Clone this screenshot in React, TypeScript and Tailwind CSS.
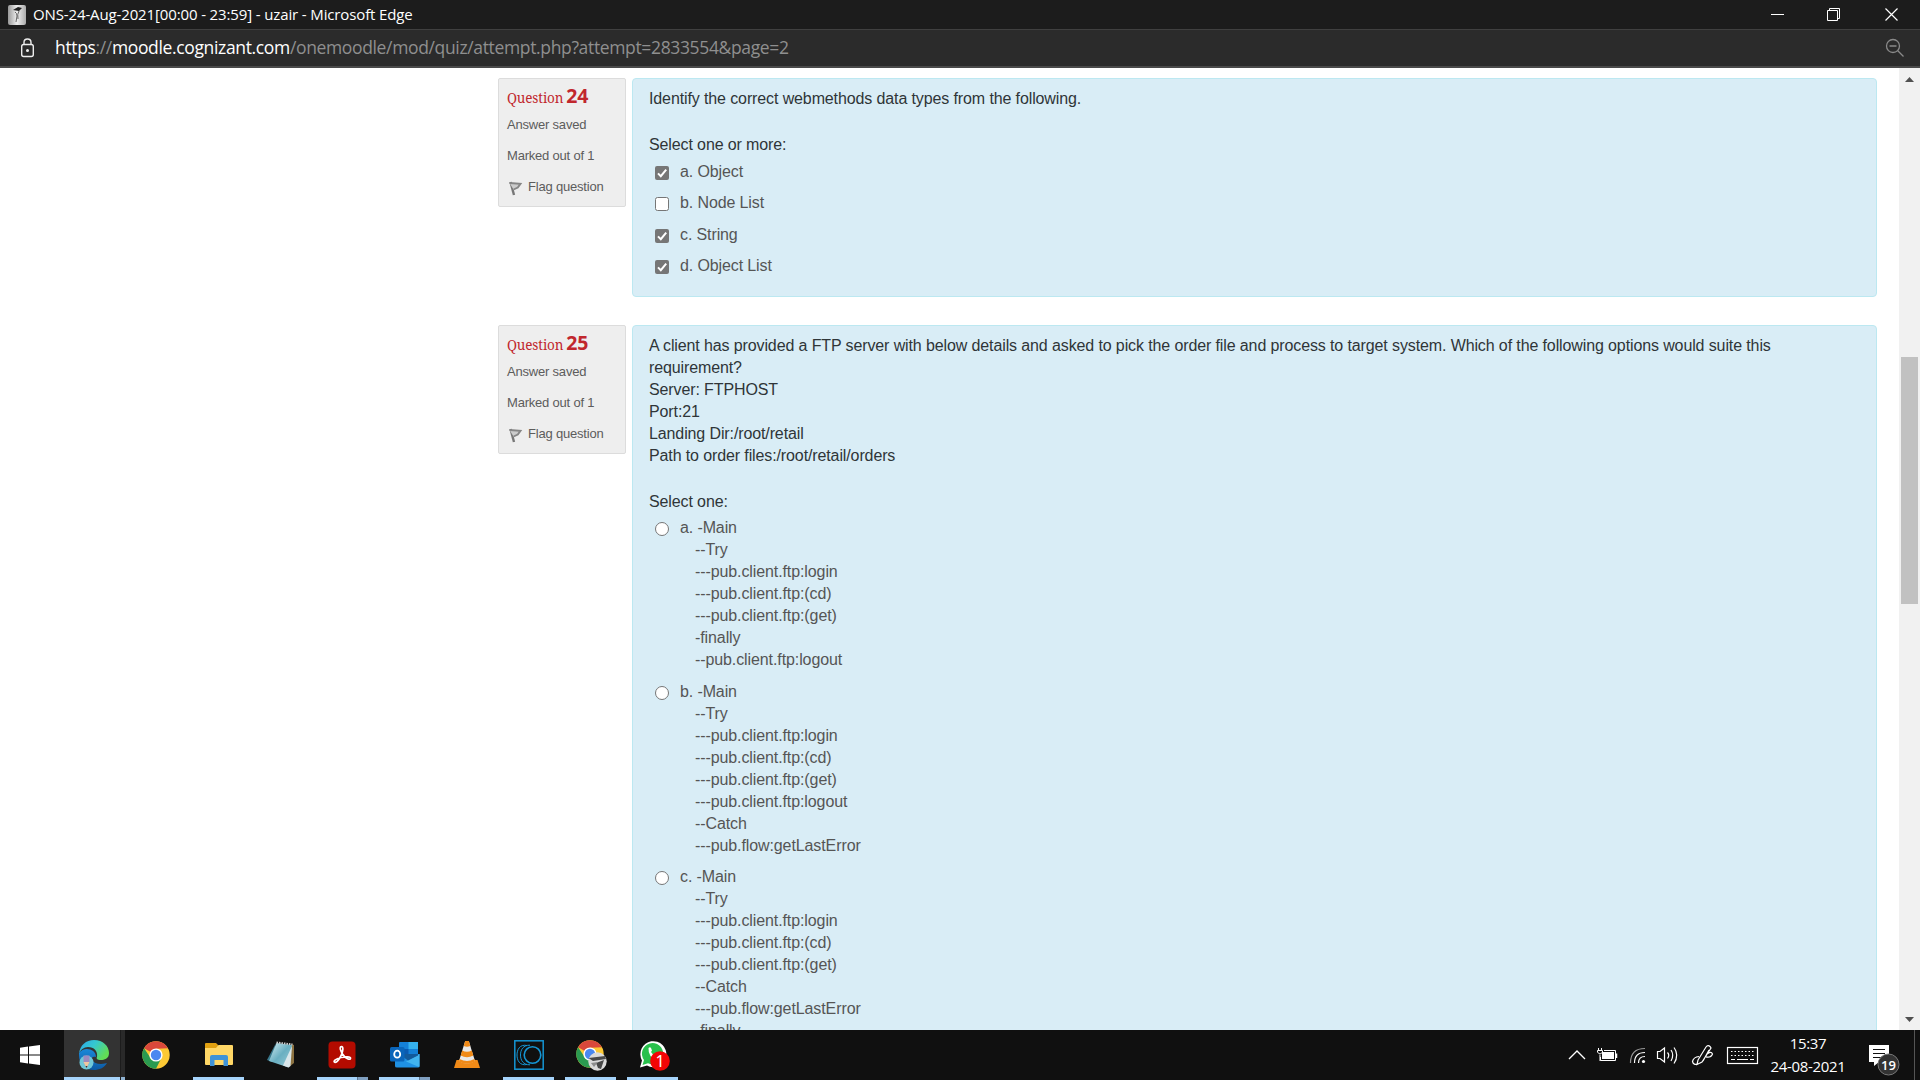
import React from "react";

const BODY = "font-['Liberation_Sans',sans-serif]";

function Flag() {
  return (
    <svg width="16" height="16" viewBox="0 0 16 16" className="mt-[4px] shrink-0">
      <path d="M3.500 2 L7 15" stroke="#777" strokeWidth="2.400" fill="none" />
      <path d="M2.500 3 L13.500 3.800 L10.800 7.600 L6.600 9.500" stroke="#858585" strokeWidth="1.900" fill="#ccc" />
    </svg>
  );
}

function Info({ n }: { n: string }) {
  return (
    <div className="h-[129px] w-[128px] shrink-0 rounded-[2px] border border-[#dcdcdc] bg-[#eee] pl-[8px] text-[13px] tracking-[-0.2px] text-[#5c5c5c]">
      <div className="flex h-[35px] items-baseline pt-[3px] text-[#c1272d]">
        <span className="font-['Noto_Serif','DejaVu_Serif',serif] text-[13.5px] tracking-[-0.15px]">Question</span>
        <span className="ml-[3px] font-['Noto_Sans',sans-serif] text-[19.5px] leading-[28px] font-bold tracking-[-0.2px]">{n}</span>
      </div>
      <div className="h-[31px] leading-[22px]">Answer saved</div>
      <div className="h-[31px] leading-[22px]">Marked out of 1</div>
      <div className="flex gap-[5px] leading-[22px]">
        <Flag />
        <span>Flag question</span>
      </div>
    </div>
  );
}

function Check({ on }: { on: boolean }) {
  return on ? (
    <svg width="14" height="14" viewBox="0 0 14 14" className="mt-[5px] shrink-0">
      <rect width="14" height="14" rx="2" fill="#767676" />
      <path d="M3 7.4 L5.8 10.2 L11.2 3.6" stroke="#fff" strokeWidth="2" fill="none" />
    </svg>
  ) : (
    <span className="mt-[5px] h-[14px] w-[14px] shrink-0 rounded-[2.5px] border border-[#767676] bg-white" />
  );
}

const checks: [string, boolean][] = [
  ["a. Object", true],
  ["b. Node List", false],
  ["c. String", true],
  ["d. Object List", true],
];

const radios: { k: string; lines: string[] }[] = [
  { k: "a.", lines: ["-Main", "--Try", "---pub.client.ftp:login", "---pub.client.ftp:(cd)", "---pub.client.ftp:(get)", "-finally", "--pub.client.ftp:logout"] },
  { k: "b.", lines: ["-Main", "--Try", "---pub.client.ftp:login", "---pub.client.ftp:(cd)", "---pub.client.ftp:(get)", "---pub.client.ftp:logout", "--Catch", "---pub.flow:getLastError"] },
  { k: "c.", lines: ["-Main", "--Try", "---pub.client.ftp:login", "---pub.client.ftp:(cd)", "---pub.client.ftp:(get)", "--Catch", "---pub.flow:getLastError", "-finally"] },
];

function TitleBar() {
  return (
    <div className="flex h-[30px] shrink-0 items-center border-b border-[#404040] bg-[#1c1c1c] text-white">
      <svg width="18" height="20" viewBox="0 0 18 20" className="ml-[8px]">
        <defs>
          <linearGradient id="fav"><stop offset="0" stopColor="#999" /><stop offset=".5" stopColor="#eee" /><stop offset="1" stopColor="#aaa" /></linearGradient>
        </defs>
        <rect width="18" height="20" rx="2" fill="url(#fav)" />
        <path d="M5 5 L10 2 L14 3 L11 6 Z" fill="#222" />
        <path d="M7 7 Q9 8 9 11 L8 17 M11 6 Q9 9 10 14" stroke="#666" fill="none" />
      </svg>
      <span className="ml-[7px] font-['Open_Sans',sans-serif] text-[15px] tracking-[-0.13px] whitespace-nowrap">ONS-24-Aug-2021[00:00 - 23:59] - uzair - Microsoft Edge</span>
      <svg width="160" height="28" viewBox="0 0 160 28" className="ml-auto" fill="none" stroke="#fff">
        <path d="M11 13.5 H24" />
        <path d="M67.500 9.500 H77.500 V19.500 H67.500 Z M69.500 9.500 V7.500 H79.500 V17.500 H77.500" />
        <path d="M125.500 7.500 L137.500 19.500 M137.500 7.500 L125.500 19.500" strokeWidth="1.2" />
      </svg>
    </div>
  );
}

function AddressBar() {
  return (
    <div className="flex h-[38px] shrink-0 items-center border-b-2 border-[#4a4a4a] bg-[#2b2b2b]">
      <svg width="16" height="20" viewBox="0 0 16 20" className="ml-[19px]" fill="none" stroke="#eee" strokeWidth="1.4">
        <rect x="2.700" y="6.500" width="11.600" height="12" rx="2" />
        <path d="M5 6.500 V4.500 Q5 1 8.500 1 Q12 1 12 4.500 V6.500" />
        <circle cx="8.500" cy="12.500" r=".8" fill="#eee" />
      </svg>
      <span className="mb-[2px] ml-[20px] font-['Open_Sans',sans-serif] text-[17.5px] tracking-[-0.35px] whitespace-nowrap text-[#8f8f8f]">
        <span className="text-white">https</span>://<span className="text-white">moodle.cognizant.com</span>/onemoodle/mod/quiz/attempt.php?attempt=2833554&amp;page=2
      </span>
      <svg width="20" height="20" viewBox="0 0 20 20" className="mr-[15px] ml-auto" fill="none" stroke="#8a8a8a" strokeWidth="1.300">
        <circle cx="8" cy="8" r="6.500" />
        <path d="M4.500 8 H11.500 M12.800 12.800 L18.500 18.500" />
      </svg>
    </div>
  );
}

function ChromeLogo() {
  return (
    <g>
      <circle cx="14" cy="14" r="13.700" fill="#fcc934" />
      <path d="M14 14 L2.100 7.150 A13.700 13.700 0 0 1 25.900 7.150 L14 7.800 Z" fill="#d9483b" />
      <path d="M14 14 L19.400 17.100 L14 27.700 A13.700 13.700 0 0 1 2.100 7.150 L8.600 17.100 Z" fill="#2a9a50" />
      <circle cx="14" cy="14" r="6.600" fill="#fff" />
      <circle cx="14" cy="14" r="5.200" fill="#4a88f0" />
    </g>
  );
}

const S = { width: 30, height: 30, viewBox: "0 0 30 30" };

function Task({ w = 51, gap = 0, shade = "", bar = "", children }: { w?: number; gap?: number; shade?: string; bar?: string; children: React.ReactNode }) {
  return (
    <div className={"flex h-[50px] shrink-0 flex-col items-center justify-between " + shade} style={{ width: w, marginRight: gap }}>
      <div className="flex h-[47px] items-center pt-[3px]">{children}</div>
      <div className={"flex h-[3px] w-full " + (bar ? "bg-[#a6d4fb]" : "")}>
        {bar === "double" && <span className="ml-auto w-[11px] border-l border-[#5a7590] bg-[#7f9fc0]" />}
      </div>
    </div>
  );
}

function Taskbar() {
  return (
    <div className="flex h-[50px] shrink-0 items-center bg-[#101010] text-white">
      <div className="flex w-[64px] shrink-0 justify-center">
        <svg width="20" height="20" viewBox="0 0 20 20" className="mr-[4px]" fill="#fff">
          <path d="M0 2.800 L8 1.600 V9.400 H0 Z M9 1.450 L20 0 V9.400 H9 Z M0 10.600 H8 V18.400 L0 17.200 Z M9 10.600 H20 V20 L9 18.550 Z" />
        </svg>
      </div>
      <div className="flex bg-[#292929]">
        <Task w={56} shade="bg-[#333]" bar="single">
          <svg width="30" height="30" viewBox="0 0 30 30" className="ml-[4px]">
            <defs>
              <linearGradient id="e1" x1="0" x2="1" y1="0" y2=".5"><stop offset="0" stopColor="#2aa5e8" /><stop offset=".5" stopColor="#35c8d0" /><stop offset="1" stopColor="#62dd55" /></linearGradient>
              <linearGradient id="e2" x1="0" x2="0" y1="0" y2="1"><stop offset="0" stopColor="#1b88d8" /><stop offset="1" stopColor="#0c59a4" /></linearGradient>
            </defs>
            <path d="M0 13 C5 6 17 9 17 17 C10 15 12 24 22 24 C25 24 27 23 28 23 C25 28 20 30 15 30 C6 30 0 24 0 15 Z" fill="url(#e2)" />
            <path d="M0 14 C1 5 7 0 15 0 C24 0 30 6 30 13 C30 19 25 20 22 20 C18 20 17 18.500 18 17 C19 11 15 7 9 7 C5 7 1 10 0 14 Z" fill="url(#e1)" />
            <circle cx="7.500" cy="22.500" r="7" fill="#70c8d8" />
            <path d="M4.500 15.500 H10.500 V22 L7.500 28 L4.500 22 Z" fill="#9d8ac0" />
            <path d="M4.500 22 H10.500 L7.500 28 Z" fill="#f0c8a0" />
            <path d="M6.500 26 H8.500 L7.500 28 Z" fill="#333" />
          </svg>
        </Task>
        <div className="flex h-[50px] w-[5px] items-end border-l border-[#1c1c1c]">
          <span className="h-[3px] w-full bg-[#8fb2d2]" />
        </div>
      </div>
      <Task w={51} gap={11}>
        <svg width="28" height="28" viewBox="0 0 28 28" className="ml-[10px]"><ChromeLogo /></svg>
      </Task>
      <div className="w-[6px] shrink-0" />
      <Task gap={11} bar="single">
        <svg width="28" height="24" viewBox="0 0 28 24" className="-mt-[2px]">
          <path d="M0 2 Q0 1 1 1 H11 L13 3 V8 H0 Z" fill="#e0a010" />
          <path d="M0 6 H11 L13.500 3 H27 Q28 3 28 4 V22 Q28 23 27 23 H1 Q0 23 0 22 Z" fill="#ffd766" />
          <path d="M5 24 V15 Q5 13 7 13 H21 Q23 13 23 15 V24 H18.500 V18 H9.500 V24 Z" fill="#3f93d8" />
        </svg>
      </Task>
      <Task gap={11}>
        <svg {...S}>
          <defs><linearGradient id="np" x1="0" x2="1" y1="0" y2="1"><stop offset="0" stopColor="#d5edf2" /><stop offset=".5" stopColor="#69afc1" /><stop offset="1" stopColor="#9cccd8" /></linearGradient></defs>
          <path d="M25 4 L28 5 V23 L23 27 Z" fill="#8d7342" />
          <path d="M10 3 L1 20 L6 22 Z" fill="#39788c" />
          <path d="M10.500 3 L26 5 L22.500 27.500 L3 21 Z" fill="url(#np)" />
          <path d="M26 6 L24.500 26 L22.500 27.500 L17 25.500 Z" fill="#d9e6ea" />
          <path d="M10.500 2.500 L26.500 4.500" stroke="#ccc" strokeWidth="2" strokeDasharray="1.500 1" />
        </svg>
      </Task>
      <Task gap={11} bar="double">
        <svg width="28" height="28" viewBox="0 0 28 28" className="-ml-px">
          <rect x=".5" y=".5" width="27" height="27" rx="4" fill="#b30b00" />
          <path d="M12.500 6 C14.500 4.500 15.500 7 14.500 10.500 C13.500 15 9.500 21.500 7 21.300 C4.500 21 7.500 17.600 13 16.500 C18 15.500 22.500 15.500 22.500 17.300 C22.300 19.500 17.500 17.800 14.500 13 C12.500 9.500 11.700 7 12.500 6 Z" fill="none" stroke="#fff" strokeWidth="1.700" />
        </svg>
      </Task>
      <Task gap={11} bar="double">
        <svg {...S}>
          <rect x="9" y="2" width="19" height="20" rx="1" fill="#1480d8" />
          <path d="M18.500 2 H28 V9 H18.500 Z" fill="#35b1ee" />
          <path d="M9 9 H18.500 V16 H9 Z" fill="#0a5ab0" />
          <path d="M5 15 L29.500 14 V26 Q29.500 27.500 28 27.500 H7 Q5 27.500 5 26 Z" fill="#1f91e4" />
          <path d="M16 21.500 L29.500 14 V26 Q29.500 27 29 27 Z" fill="#41b4f0" />
          <path d="M9 14 L18 20.500 L28 15.500 V14 Z" fill="#125a9c" />
          <rect x="0" y="7" width="14.500" height="14.500" rx="1.500" fill="#0a65ba" />
          <ellipse cx="7.200" cy="14.200" rx="3" ry="3.500" fill="none" stroke="#fff" strokeWidth="1.800" />
        </svg>
      </Task>
      <Task gap={11}>
        <svg {...S}>
          <path d="M4.500 20 H25.500 L28 28 H2 Z" fill="#f08a17" />
          <path d="M13.200 1 H16.800 L23 21 Q15 26 7 21 Z" fill="#e9e9e9" />
          <path d="M13.200 1 H16.800 L18.300 6 Q15 7.500 11.700 6 Z M10.200 10.500 Q15 13 19.800 10.500 L21.300 15.500 Q15 19 8.700 15.500 Z M7.600 19 Q15 23 22.400 19 L23 21.500 Q15 26 7 21.500 Z" fill="#f08a17" />
        </svg>
      </Task>
      <Task gap={11} bar="single">
        <svg {...S} fill="none" stroke="#1595d3">
          <rect x=".8" y=".8" width="28.400" height="28.400" strokeWidth="1.500" />
          <circle cx="18.500" cy="15" r="8.300" strokeWidth="1.600" />
          <path d="M13 5.500 C5.500 4 3 10 3 15 C3 20 5.500 26 13 24.500 M16 5.200 C9 5 6.500 10 6.500 15 C6.500 20 9 25 16 24.800" />
        </svg>
      </Task>
      <Task gap={11} bar="single">
        <svg width="32" height="31" viewBox="0 0 32 31" className="ml-[3px]">
          <ChromeLogo />
          <circle cx="21.500" cy="21.500" r="9.200" fill="#dadada" />
          <path d="M12.500 18 L29 16 L30 19 L17 21 Z M20 23 L28 20 L25 29 L22 28 Z" fill="#484848" />
          <path d="M15 23 L22 22 L18 27 Z" fill="#8d8d8d" />
        </svg>
      </Task>
      <Task bar="single">
        <svg width="31" height="31" viewBox="0 0 31 31" className="ml-[3px]">
          <path d="M1 27.500 L3 20.500 A13 13 0 1 1 8 25.500 Z" fill="#fff" />
          <path d="M3.500 25 L5 20 A10.600 10.600 0 1 1 9 23.300 Z" fill="#28c04c" />
          <path d="M9.500 8 Q11 6.500 12 8 L13 10.500 L12 12 Q14 15.500 17 16.500 L18.500 15 L21 16.500 Q21 19 18 19.500 Q9 18 9.500 8" fill="#fff" />
          <circle cx="21" cy="21" r="9.800" fill="#f20505" />
          <text x="21" y="26.500" textAnchor="middle" fontSize="16" fill="#fff" className="font-['Noto_Sans',sans-serif]">1</text>
        </svg>
      </Task>
      <svg width="195" height="50" viewBox="0 0 195 50" className="ml-auto shrink-0" fill="none" stroke="#fff">
        <path d="M4 29 L12 21 L20 29" strokeWidth="1.300" />
        <rect x="37" y="22" width="12" height="7" fill="#fff" stroke="none" />
        <path d="M39 20.500 H50.500 V30.500 H35.500 V27" />
        <path d="M51.500 23.500 V28" strokeWidth="1.500" />
        <path d="M33.500 18 V20 M36.500 18 V20 M32.500 20.500 H37.500 V22 Q35 26 32.500 22 Z M35 25 V31" />
        <g strokeWidth="1.200">
          <path d="M65.500 33 Q65.500 18.500 80 18.500" stroke="#999" />
          <path d="M69.500 33 Q69.500 22.500 80 22.500 M73.500 33 Q73.500 26.500 80 26.500" />
          <circle cx="78.500" cy="31.500" r="1.600" fill="#fff" stroke="none" />
          <path d="M92.500 21.500 H95 L99.500 18 V32 L95 28.500 H92.500 Z M102.500 22.500 Q105 25 102.500 28.500 M106 20 Q109.500 25 106 31 M109 17.500 Q114.500 25 109 33.500" />
          <path d="M133 30 L141 17 Q143 14.500 145 16.500 L146 18 L137 32 L132 34.500 Z M134 26.500 Q128.500 27 127.500 31.500 Q128.500 35.500 133 34 M138 31 L144 20 M143 23.500 Q146 21 147.500 24 Q146 28 141 27" />
        </g>
        <rect x="162.500" y="17.500" width="30" height="16" strokeWidth="1.200" />
        <path d="M166 21.500 H189 M166 25.500 H189" strokeDasharray="1.500 2" strokeWidth="1.200" />
        <path d="M166 29.500 H170 M172 29.500 H183 M185 29.500 H189" strokeWidth="1.200" />
      </svg>
      <div className="ml-[9px] w-[78px] shrink-0 text-center font-['Open_Sans',sans-serif] text-[15px] leading-[23px] tracking-[-0.35px] whitespace-nowrap">
        <div>15:37</div>
        <div>24-08-2021</div>
      </div>
      <svg width="34" height="50" viewBox="0 0 34 50" className="ml-[22px] shrink-0">
        <path d="M0 15 H20 V32 H10 L5 36 V32 H0 Z" fill="#fff" />
        <path d="M4 19.500 H16 M4 23.500 H16 M4 27.500 H12" stroke="#111" strokeWidth="1.200" />
        <circle cx="19.500" cy="34.500" r="10.500" fill="#333" stroke="#777" />
        <text x="19.500" y="39.500" textAnchor="middle" fontSize="13" fill="#fff" className="font-['Open_Sans',sans-serif] font-semibold">19</text>
      </svg>
      <div className="mr-[5px] ml-[11px] h-[50px] w-px shrink-0 bg-[#555]" />
    </div>
  );
}

export default function App() {
  return (
    <div className="flex h-[1080px] w-[1920px] flex-col overflow-hidden bg-white">
      <TitleBar />
      <AddressBar />
      <div className={"flex min-h-0 flex-1 " + BODY}>
        <main className="flex-1 overflow-hidden pt-[10px] pl-[498px] text-[16px] leading-[22px] tracking-[-0.116px] text-[#2f3538]">
          <section className="flex gap-[6px]">
            <Info n="24" />
            <div className="h-[219px] w-[1245px] rounded-[4px] border border-[#bce8f1] bg-[#d9edf6] pt-[9px] pl-[16px]">
              <p>Identify the correct webmethods data types from the following.</p>
              <p className="mt-[24px]">Select one or more:</p>
              <div className="mt-[5px] pl-[6px] text-[#555]">
                {checks.map(([t, on]) => (
                  <div key={t} className="flex h-[31.3px] gap-[11px]">
                    <Check on={on} />
                    <span>{t}</span>
                  </div>
                ))}
              </div>
            </div>
          </section>
          <section className="mt-[28px] flex gap-[6px]">
            <Info n="25" />
            <div className="h-[900px] w-[1245px] rounded-[4px] border border-[#bce8f1] bg-[#d9edf6] pt-[9px] pl-[16px]">
              <p className="w-[1180px]">A client has provided a FTP server with below details and asked to pick the order file and process to target system. Which of the following options would suite this requirement?</p>
              <p>Server: FTPHOST</p>
              <p>Port:21</p>
              <p>Landing Dir:/root/retail</p>
              <p>Path to order files:/root/retail/orders</p>
              <p className="mt-[24px]">Select one:</p>
              <div className="mt-[4px] pl-[6px] text-[#555]">
                {radios.map((r) => (
                  <div key={r.k} className="mb-[9.500px] flex">
                    <span className="mt-[5px] mr-[11px] h-[14px] w-[14px] shrink-0 rounded-full border border-[#767676] bg-white" />
                    <div>
                      {r.lines.map((l, i) => (
                        <div key={i} className={i ? "pl-[15px] tracking-[-0.1px]" : ""}>{i ? l : r.k + " " + l}</div>
                      ))}
                    </div>
                  </div>
                ))}
              </div>
            </div>
          </section>
        </main>
        <aside className="flex w-[21px] shrink-0 flex-col items-center bg-[#f1f1f1]">
          <svg width="21" height="21" viewBox="0 0 21 21"><path d="M6 14 L10.500 9 L15 14 Z" fill="#505050" /></svg>
          <div className="mt-[268px] h-[247px] w-[17px] bg-[#c1c1c1]" />
          <svg width="21" height="21" viewBox="0 0 21 21" className="mt-auto"><path d="M6 8 L10.500 13 L15 8 Z" fill="#505050" /></svg>
        </aside>
      </div>
      <Taskbar />
    </div>
  );
}
